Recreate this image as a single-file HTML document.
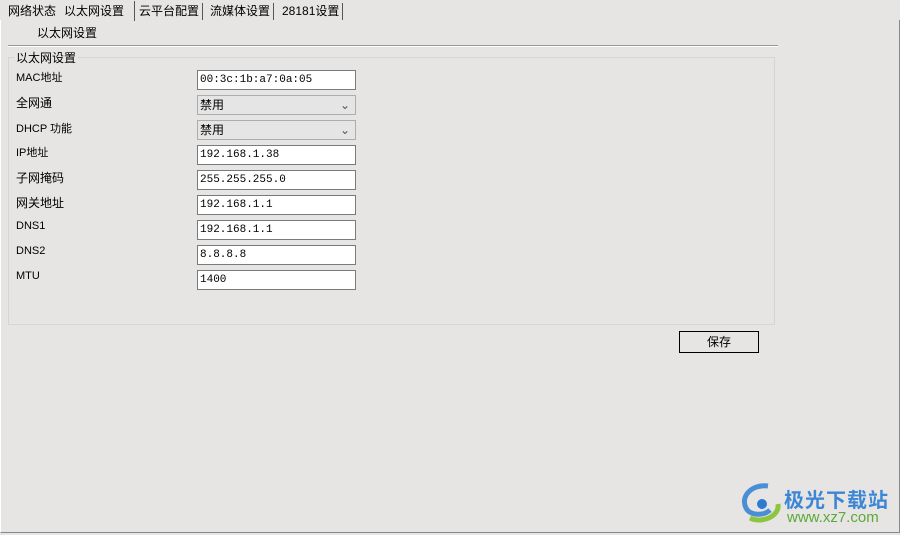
<!DOCTYPE html><html><head><style>
body{margin:0;width:900px;height:535px;background:#e6e5e3;font-family:"Liberation Sans","Noto Sans CJK SC",sans-serif;font-size:12px;color:#000;position:relative;overflow:hidden}
.a{position:absolute}
.tab{position:absolute;top:3px;height:17px;line-height:17px;border-right:1px solid #555;padding:0 3px;font-size:12px}
.inp{position:absolute;left:197px;width:155px;height:18px;border:1px solid #7a7a7a;background:#fff;font-family:"Liberation Mono",monospace;font-size:11px;line-height:18px;padding-left:2px;box-sizing:content-box}
.sel{background:#e5e5e5;border-color:#adadad;font-family:"Liberation Sans","Noto Sans CJK SC",sans-serif;font-size:12px}
.lab{position:absolute;left:16px;font-size:12px}
</style></head><body>
<div class="a" style="left:0;top:20px;width:898px;height:512px;border-right:1px solid #888;border-bottom:1px solid #888;border-left:1px solid #fff"></div>
<div class="tab" style="left:5px;border:none">网络状态</div>
<div class="a" style="left:60px;top:1px;width:70px;height:20px;background:#e6e5e3;border-right:1px solid #555;line-height:20px;padding-left:4px">以太网设置</div>
<div class="tab" style="left:136px">云平台配置</div>
<div class="tab" style="left:207px">流媒体设置</div>
<div class="tab" style="left:279px">28181设置</div>
<div class="a" style="left:37px;top:24px">以太网设置</div>
<div class="a" style="left:8px;top:45px;width:770px;height:1px;background:#999;border-bottom:1px solid #fff"></div>
<div class="a" style="left:8px;top:57px;width:765px;height:266px;border:1px solid #d6d5d2"></div>
<div class="a" style="left:14px;top:49px;background:#e6e5e3;padding:0 2px">以太网设置</div>
<div class="lab" style="top:69px;font-size:11px">MAC地址</div>
<div class="lab" style="top:94px">全网通</div>
<div class="lab" style="top:120px;font-size:11px">DHCP 功能</div>
<div class="lab" style="top:144px;font-size:11px">IP地址</div>
<div class="lab" style="top:169px">子网掩码</div>
<div class="lab" style="top:194px">网关地址</div>
<div class="lab" style="top:220px;font-size:11px">DNS1</div>
<div class="lab" style="top:245px;font-size:11px">DNS2</div>
<div class="lab" style="top:270px;font-size:11px">MTU</div>
<div class="inp" style="top:70px">00:3c:1b:a7:0a:05</div>
<div class="inp sel" style="top:95px">禁用<span class="a" style="right:5px;top:0;color:#555">&#8964;</span></div>
<div class="inp sel" style="top:120px">禁用<span class="a" style="right:5px;top:0;color:#555">&#8964;</span></div>
<div class="inp" style="top:145px">192.168.1.38</div>
<div class="inp" style="top:170px">255.255.255.0</div>
<div class="inp" style="top:195px">192.168.1.1</div>
<div class="inp" style="top:220px">192.168.1.1</div>
<div class="inp" style="top:245px">8.8.8.8</div>
<div class="inp" style="top:270px">1400</div>
<div class="a" style="left:679px;top:331px;width:78px;height:20px;border:1px solid #000;text-align:center;line-height:20px">保存</div>
<svg class="a" style="left:738px;top:482px" width="48" height="42" viewBox="0 0 48 42"><path d="M30 4C14 2 2 14 8 26c4 8 18 8 24 2" fill="none" stroke="#4a8fd6" stroke-width="5"/><path d="M12 36c12 6 30-2 28-14" fill="none" stroke="#8cc63f" stroke-width="5"/><circle cx="24" cy="22" r="5" fill="#2c7bd0"/></svg>
<div class="a" style="left:784px;top:484px;font-size:20px;font-weight:bold;color:#3c86d6;letter-spacing:1px">极光下载站</div>
<div class="a" style="left:787px;top:509px;font-size:15px;color:#5aaa3a">www.xz7.com</div>
</body></html>
